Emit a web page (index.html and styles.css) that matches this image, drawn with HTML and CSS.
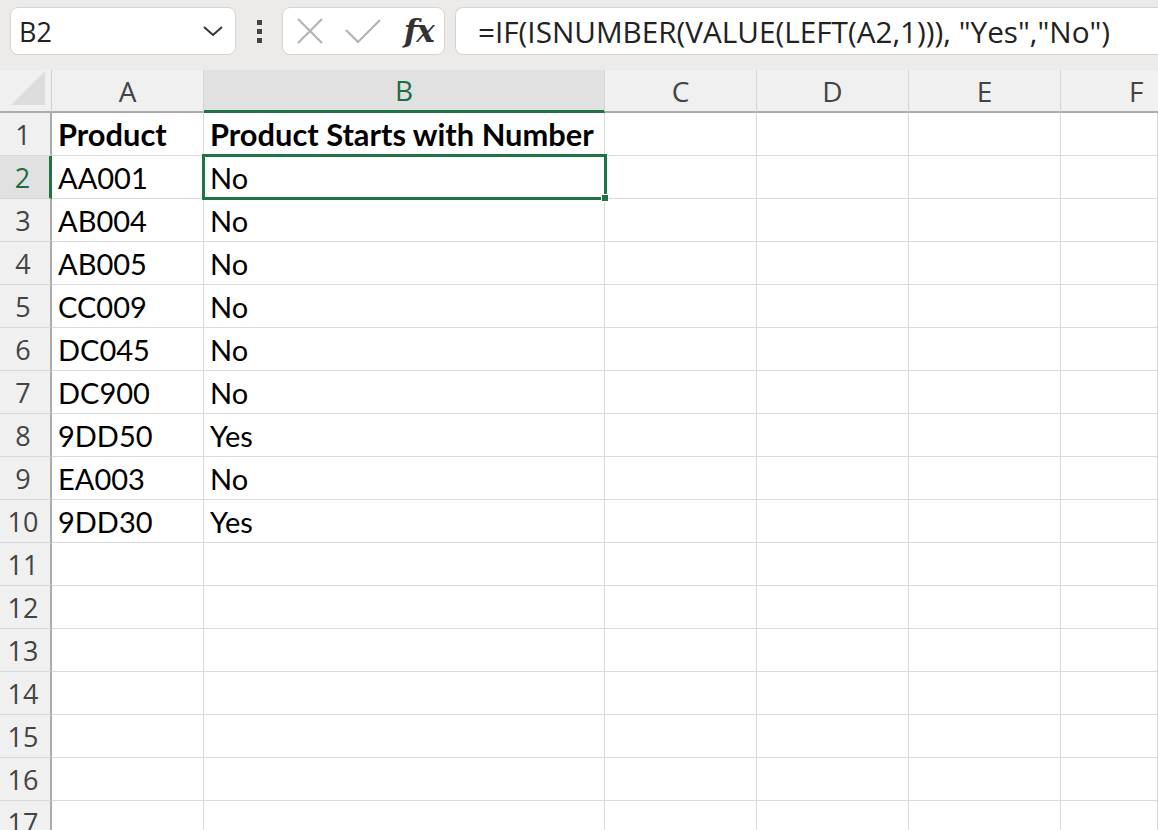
FILE: index.html
```html
<!DOCTYPE html>
<html>
<head>
<meta charset="utf-8">
<link rel="stylesheet" href="styles.css">
</head>
<body>
<div class="topbar">
  <div class="namebox">
    <span class="name">B2</span>
    <svg class="chev" width="22" height="14" viewBox="0 0 22 14"><path d="M2 3 L11 11 L20 3" fill="none" stroke="#333" stroke-width="2"/></svg>
  </div>
  <div class="dots"><i></i><i></i><i></i></div>
  <div class="fxbox">
    <svg width="28" height="28" viewBox="0 0 28 28"><path d="M2 2 L26 26 M26 2 L2 26" stroke="#b4b4b4" stroke-width="2.2" fill="none"/></svg>
    <svg width="38" height="30" viewBox="0 0 38 30"><path d="M2 14 L14 26 L36 4" stroke="#b4b4b4" stroke-width="2.2" fill="none"/></svg>
    <span class="fx">fx</span>
  </div>
  <div class="formula">=IF(ISNUMBER(VALUE(LEFT(A2,1))), "Yes","No")</div>
</div>
<div class="sheet">
  <div class="corner"><div class="tri"></div></div>
  <div class="ch">A</div>
  <div class="ch sel">B</div>
  <div class="ch">C</div>
  <div class="ch">D</div>
  <div class="ch">E</div>
  <div class="ch last">F</div>

  <div class="rh">1</div><div class="c b">Product</div><div class="c b">Product Starts with Number</div><div class="c"></div><div class="c"></div><div class="c"></div><div class="c"></div>
  <div class="rh sel">2</div><div class="c">AA001</div><div class="c active">No<span class="selbox"><span class="handle"></span></span></div><div class="c"></div><div class="c"></div><div class="c"></div><div class="c"></div>
  <div class="rh">3</div><div class="c">AB004</div><div class="c">No</div><div class="c"></div><div class="c"></div><div class="c"></div><div class="c"></div>
  <div class="rh">4</div><div class="c">AB005</div><div class="c">No</div><div class="c"></div><div class="c"></div><div class="c"></div><div class="c"></div>
  <div class="rh">5</div><div class="c">CC009</div><div class="c">No</div><div class="c"></div><div class="c"></div><div class="c"></div><div class="c"></div>
  <div class="rh">6</div><div class="c">DC045</div><div class="c">No</div><div class="c"></div><div class="c"></div><div class="c"></div><div class="c"></div>
  <div class="rh">7</div><div class="c">DC900</div><div class="c">No</div><div class="c"></div><div class="c"></div><div class="c"></div><div class="c"></div>
  <div class="rh">8</div><div class="c">9DD50</div><div class="c">Yes</div><div class="c"></div><div class="c"></div><div class="c"></div><div class="c"></div>
  <div class="rh">9</div><div class="c">EA003</div><div class="c">No</div><div class="c"></div><div class="c"></div><div class="c"></div><div class="c"></div>
  <div class="rh">10</div><div class="c">9DD30</div><div class="c">Yes</div><div class="c"></div><div class="c"></div><div class="c"></div><div class="c"></div>
  <div class="rh">11</div><div class="c"></div><div class="c"></div><div class="c"></div><div class="c"></div><div class="c"></div><div class="c"></div>
  <div class="rh">12</div><div class="c"></div><div class="c"></div><div class="c"></div><div class="c"></div><div class="c"></div><div class="c"></div>
  <div class="rh">13</div><div class="c"></div><div class="c"></div><div class="c"></div><div class="c"></div><div class="c"></div><div class="c"></div>
  <div class="rh">14</div><div class="c"></div><div class="c"></div><div class="c"></div><div class="c"></div><div class="c"></div><div class="c"></div>
  <div class="rh">15</div><div class="c"></div><div class="c"></div><div class="c"></div><div class="c"></div><div class="c"></div><div class="c"></div>
  <div class="rh">16</div><div class="c"></div><div class="c"></div><div class="c"></div><div class="c"></div><div class="c"></div><div class="c"></div>
  <div class="rh">17</div><div class="c"></div><div class="c"></div><div class="c"></div><div class="c"></div><div class="c"></div><div class="c"></div>
</div>
</body>
</html>
```
FILE: styles.css
```css
* { box-sizing: border-box; }
html, body { margin: 0; padding: 0; }
body {
  width: 1158px;
  height: 830px;
  overflow: hidden;
  background: #ffffff;
  font-family: "Open Sans", "Noto Sans", sans-serif;
}
.topbar {
  height: 70px;
  background: #edebe9;
  display: flex;
  align-items: flex-start;
  padding-top: 7px;
}
.namebox {
  margin-left: 10px;
  width: 226px;
  height: 48px;
  background: #fff;
  border: 1px solid #d6d4d2;
  border-radius: 8px;
  display: flex;
  align-items: center;
  justify-content: space-between;
  padding: 0 11px 0 8px;
}
.name {
  font-size: 27px;
  color: #222;
  font-family: "Open Sans", sans-serif;
}
.chev { display: block; }
.dots {
  width: 46px;
  height: 48px;
  display: flex;
  flex-direction: column;
  align-items: center;
  justify-content: center;
  gap: 4px;
}
.dots i {
  display: block;
  width: 5px;
  height: 5px;
  background: #444;
}
.fxbox {
  width: 163px;
  height: 48px;
  background: #fff;
  border: 1px solid #d6d4d2;
  border-radius: 8px;
  display: flex;
  align-items: center;
  padding: 0 10px 0 13px;
  gap: 20px;
}
.fxbox svg { display: block; }
.fx {
  font-family: "DejaVu Serif", "Liberation Serif", serif;
  font-style: italic;
  font-weight: 700;
  font-size: 31px;
  color: #333;
  margin-left: 2px;
  line-height: 1;
  letter-spacing: -1px;
}
.formula {
  margin-left: 10px;
  flex: 1;
  height: 48px;
  background: #fff;
  border: 1px solid #d6d4d2;
  border-right: none;
  border-radius: 8px 0 0 8px;
  display: flex;
  align-items: center;
  padding-left: 22px;
  font-size: 29.7px;
  color: #222;
  white-space: nowrap;
  font-family: "Open Sans", sans-serif;
}
.sheet {
  display: grid;
  grid-template-columns: 52px 152px 401px 152px 152px 152px 97px;
  grid-template-rows: 43px;
  grid-auto-rows: 43px;
}
.corner {
  background: #f0f0f0;
  border-right: 1px solid #d0d0d0;
  border-bottom: 2px solid #ababab;
  position: relative;
}
.tri {
  position: absolute;
  right: 6px;
  bottom: 6px;
  width: 0;
  height: 0;
  border-left: 34px solid transparent;
  border-bottom: 34px solid #dcdcdc;
}
.ch {
  background: #f0f0f0;
  border-right: 1px solid #d4d4d4;
  border-bottom: 2px solid #ababab;
  display: flex;
  align-items: center;
  justify-content: center;
  font-size: 28px;
  color: #444;
  font-family: "Open Sans", sans-serif;
}
.ch.sel {
  background: #e1e1e1;
  color: #1e6e43;
  border-bottom: 3px solid #217346;
}
.ch.last { justify-content: flex-start; padding-left: 68px; border-right: none; }
.rh {
  background: #f0f0f0;
  border-right: 2px solid #ababab;
  border-bottom: 1px solid #d8d8d8;
  display: flex;
  align-items: center;
  justify-content: center;
  font-size: 27px;
  color: #444;
  padding-right: 4px;
}
.rh.sel {
  background: #e1e1e1;
  color: #1e6e43;
  border-right: 3px solid #217346;
}
.c {
  border-right: 1px solid #dadada;
  border-bottom: 1px solid #dadada;
  display: flex;
  align-items: center;
  padding-left: 6px;
  font-family: "Lato", "Open Sans", sans-serif;
  font-size: 29px;
  color: #000;
  white-space: nowrap;
  overflow: visible;
}
.c.b { font-weight: 700; font-size: 30.8px; }
.c.active { position: relative; }
.selbox {
  position: absolute;
  left: -2px;
  top: -2px;
  right: -3px;
  bottom: -2px;
  border: 3px solid #217346;
  pointer-events: none;
}
.handle {
  position: absolute;
  right: -5px;
  bottom: -5px;
  width: 8px;
  height: 8px;
  background: #217346;
  border: 1px solid #fff;
}
```
